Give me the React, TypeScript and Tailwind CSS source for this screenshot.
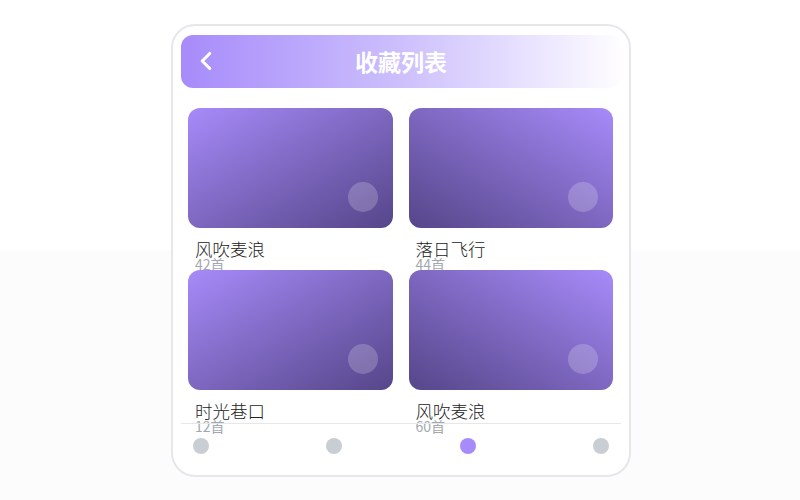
import React from 'react';
import { ChevronLeft } from 'lucide-react';

type Playlist = {
  title: string;
  count: number;
  dir: 'left' | 'right';
};

const playlists: Playlist[] = [
  { title: '风吹麦浪', count: 42, dir: 'left' },
  { title: '落日飞行', count: 44, dir: 'right' },
  { title: '时光巷口', count: 12, dir: 'left' },
  { title: '风吹麦浪', count: 60, dir: 'right' },
];

function PlaylistCard({ item }: { item: Playlist }) {
  return (
    <div className="flex flex-col">
      {/* Cover */}
      <div
        className={`relative h-[120px] rounded-xl ${
          item.dir === 'left'
            ? 'bg-gradient-to-br from-[#a78bfa] to-[#56468a]'
            : 'bg-gradient-to-bl from-[#a78bfa] to-[#56468a]'
        }`}
      >
        <div className="absolute right-[15px] bottom-[16px] h-[30px] w-[30px] rounded-full bg-white/20" />
      </div>
      {/* Meta */}
      <div className="h-[42px] pl-[7px] pt-[11px]">
        <div className="text-[17.5px] leading-[19px] font-light text-[#222222]">{item.title}</div>
        <div className="text-[14px] leading-[13px] text-[#a3a8b0]">{item.count}首</div>
      </div>
    </div>
  );
}

export default function App() {
  const active = 2;

  return (
    <div
      className="flex h-[500px] w-full items-center justify-center bg-[linear-gradient(to_bottom,#ffffff_50%,#fcfcfd_50%)]"
      style={{ fontFamily: '"Noto Sans CJK SC", "Noto Sans", sans-serif' }}
    >
      <div className="ml-[2px] flex h-[453px] w-[460px] flex-col overflow-hidden rounded-[24px] border-2 border-[#e5e7eb] bg-white px-2 pt-[9px] pb-[21px]">
        {/* Header */}
        <div className="relative flex h-[53px] shrink-0 items-center rounded-xl bg-gradient-to-r from-[#a78bfa] via-[#cdbffc] to-[#fefdff]">
          <button className="ml-[10px] flex items-center text-white">
            <ChevronLeft size={30} strokeWidth={2.5} />
          </button>
          <h1 className="pointer-events-none absolute inset-x-0 text-center text-[23px] font-bold text-white">
            收藏列表
          </h1>
        </div>

        {/* Grid */}
        <div className="min-h-0 flex-1 pl-[7px] pr-[8px] pt-5">
          <div className="grid grid-cols-2 gap-x-4">
            {playlists.map((p, i) => (
              <PlaylistCard key={i} item={p} />
            ))}
          </div>
        </div>

        {/* Pager */}
        <div className="flex shrink-0 items-center justify-between border-t border-[#e5e7eb] px-3 pt-[14px]">
          {[0, 1, 2, 3].map((i) => (
            <span
              key={i}
              className={`h-4 w-4 rounded-full ${i === active ? 'bg-[#a78bfa]' : 'bg-[#c9cdd4]'}`}
            />
          ))}
        </div>
      </div>
    </div>
  );
}
